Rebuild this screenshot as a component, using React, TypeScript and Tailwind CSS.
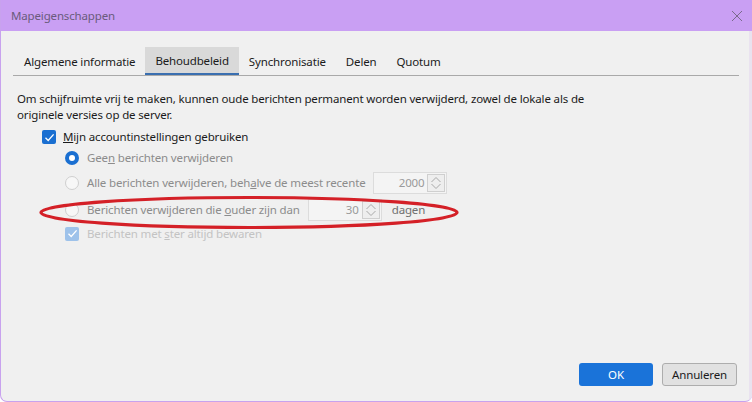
import React from "react";

const font = { fontFamily: '"Noto Sans", "Open Sans", sans-serif' };

function Spinner({ value }: { value: string }) {
  return (
    <div className="flex items-center h-[22px] w-[74px] border border-[#dcdcdc] bg-[#f4f4f4]">
      <div className="flex-1 text-right pr-[3px] text-[#9a9a9a]">{value}</div>
      <div className="w-[18px] h-[18px] mr-[1px] border border-[#cfcfcf] bg-[#eeeeee] flex items-center justify-center">
        <svg width="14" height="16" viewBox="0 0 14 16" fill="none" stroke="#a9a9a9" strokeWidth="1">
          <path d="M2.5 7 L7 2.5 L11.5 7" />
          <path d="M2.5 9 L7 13.5 L11.5 9" />
        </svg>
      </div>
    </div>
  );
}

function Radio({ checked }: { checked?: boolean }) {
  if (checked) {
    return (
      <div className="w-[14px] h-[14px] rounded-full bg-[#1a6fd1] flex items-center justify-center shrink-0">
        <div className="w-[6px] h-[6px] rounded-full bg-white" />
      </div>
    );
  }
  return <div className="w-[14px] h-[14px] rounded-full border border-[#cfcfcf] bg-[#f7f7f7] shrink-0" />;
}

export default function App() {
  return (
    <div
      className="relative w-[752px] h-[402px] flex flex-col bg-[#f0f0f0] border-l border-b border-[#c8a2ee] rounded-b-[7px] overflow-hidden text-[11.5px] tracking-[-0.15px] text-[#1b1b1b]"
      style={font}
    >
      {/* title bar */}
      <div className="h-[31px] bg-[#c99ff3] flex items-center justify-between pl-[10px] pr-[9px] shrink-0">
        <span className="text-[#6a5b7c]">Mapeigenschappen</span>
        <svg width="12" height="12" viewBox="0 0 12 12" stroke="#7a6a8c" strokeWidth="1" fill="none">
          <path d="M1 1 L11 11 M11 1 L1 11" />
        </svg>
      </div>
      <div className="absolute right-0 top-[31px] w-[3px] bottom-0 bg-[#e9e2ef]" />

      {/* tabs */}
      <div className="mt-[16px] mx-[12px] w-[726px] flex items-stretch h-[29px] border-b border-[#a9a9a9] text-[#1b1b1b]">
        <div className="px-[10px] ml-[1px] flex items-center pt-[1px]">Algemene informatie</div>
        <div className="px-[10px] flex items-center bg-[#d9d9d9] border-b-2 border-[#3a6fb0] pt-[2px]">Behoudbeleid</div>
        <div className="px-[10px] flex items-center pt-[1px]">Synchronisatie</div>
        <div className="px-[10px] flex items-center pt-[1px]">Delen</div>
        <div className="px-[10px] flex items-center pt-[1px]">Quotum</div>
      </div>

      {/* content */}
      <div className="pl-[16px] pt-[15px] leading-[16px]">
        <p>Om schijfruimte vrij te maken, kunnen oude berichten permanent worden verwijderd, zowel de lokale als de</p>
        <p>originele versies op de server.</p>
      </div>

      <div className="mt-[4px] flex flex-col">
        <div className="h-[20px] flex items-center pl-[41px] gap-[7px]">
          <div className="w-[14px] h-[14px] bg-[#1a6fd1] flex items-center justify-center rounded-[2px]">
            <svg width="11" height="11" viewBox="0 0 11 11" fill="none" stroke="white" strokeWidth="1.3">
              <path d="M1.5 5.8 L4.2 8.5 L9.6 2.4" />
            </svg>
          </div>
          <span>
            <span className="underline">M</span>ijn accountinstellingen gebruiken
          </span>
        </div>
        <div className="h-[22px] flex items-center pl-[64px] gap-[8px] text-[#8c8c8c]">
          <Radio checked />
          <span>
            Gee<span className="underline">n</span> berichten verwijderen
          </span>
        </div>
        <div className="h-[28px] flex items-center pl-[64px] gap-[8px] text-[#8c8c8c]">
          <Radio />
          <span>
            Alle berichten verwijderen, beh<span className="underline">a</span>lve de meest recente
          </span>
          <Spinner value="2000" />
        </div>
        <div className="h-[26px] flex items-center pl-[64px] gap-[8px] text-[#8c8c8c]">
          <Radio />
          <span>
            Berichten verwijderen die <span className="underline">o</span>uder zijn dan
          </span>
          <Spinner value="30" />
          <span className="ml-[2px] text-[#6f6f6f]">dagen</span>
        </div>
        <div className="h-[21px] flex items-center pl-[64px] gap-[8px] text-[#c3c3c3]">
          <div className="w-[14px] h-[14px] bg-[#9ec2ea] flex items-center justify-center rounded-[2px]">
            <svg width="11" height="11" viewBox="0 0 11 11" fill="none" stroke="white" strokeWidth="1.3">
              <path d="M1.5 5.8 L4.2 8.5 L9.6 2.4" />
            </svg>
          </div>
          <span>
            Berichten met <span className="underline">s</span>ter altijd bewaren
          </span>
        </div>
      </div>

      {/* red annotation ellipse */}
      <svg className="absolute left-[38px] top-[195px]" width="422" height="36" viewBox="0 0 422 36" fill="none">
        <ellipse cx="210" cy="17.5" rx="208" ry="15" stroke="#d42027" strokeWidth="3.2" />
      </svg>

      {/* buttons */}
      <div className="mt-auto mb-[15px] mr-[15px] flex justify-end gap-[9px]">
        <button className="w-[74px] h-[23px] rounded-[3px] bg-[#1a73d9] text-white">OK</button>
        <button className="w-[75px] h-[23px] rounded-[3px] bg-[#e1e1e1] border border-[#adadad]">Annuleren</button>
      </div>
    </div>
  );
}
